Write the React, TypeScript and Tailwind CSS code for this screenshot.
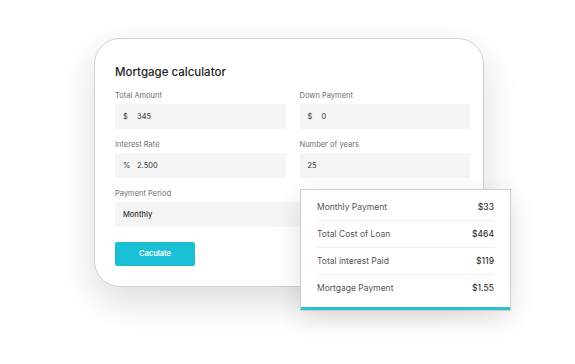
const fields = [
  { label: 'Total Amount', prefix: '$', value: '345' },
  { label: 'Down Payment', prefix: '$', value: '0' },
  { label: 'Interest Rate', prefix: '%', value: '2.500' },
  { label: 'Number of years', prefix: '', value: '25' },
];

const results = [
  { label: 'Monthly Payment', value: '$33' },
  { label: 'Total Cost of Loan', value: '$464' },
  { label: 'Total interest Paid', value: '$119' },
  { label: 'Mortgage Payment', value: '$1.55' },
];

const Field = ({ label, prefix, value }: { label: string; prefix: string; value: string }) => (
  <div className="flex flex-col">
    <span className="text-[7.5px] leading-[12px] text-[#707070]">{label}</span>
    <div className="mt-[2px] h-[25px] bg-[#f5f5f5] flex items-center px-[8px] text-[7.5px] text-[#333]">
      {prefix && <span className="w-[14px]">{prefix}</span>}
      <span>{value}</span>
    </div>
  </div>
);

const App = () => {
  return (
    <div className="relative w-[575px] h-[364px] bg-white overflow-hidden font-['Inter',sans-serif]">
      <div className="pt-[38px] pl-[94px]">
        <div className="w-[390px] h-[249px] rounded-[26px] border border-[#d2d2d2] bg-white shadow-[0_14px_36px_rgba(0,0,0,0.14)] pl-[20px] pr-[13px] pt-[24px]">
          <h1 className="text-[11.5px] leading-[18px] font-medium text-[#222]">Mortgage calculator</h1>
          <div className="mt-[9px] grid grid-cols-2 gap-x-[14px] gap-y-[10px]">
            {fields.map((f) => (
              <Field key={f.label} {...f} />
            ))}
            <div className="col-span-2 flex flex-col">
              <span className="text-[7.5px] leading-[12px] text-[#707070]">Payment Period</span>
              <div className="mt-[2px] h-[25px] bg-[#f5f5f5] flex items-center px-[8px] text-[7.5px] font-medium text-[#333]">
                Monthly
              </div>
            </div>
          </div>
          <button className="mt-[15px] w-[80px] h-[24px] rounded-[2px] bg-[#19c0d4] text-white text-[7.5px] font-semibold">
            Caculate
          </button>
        </div>
      </div>

      <div className="absolute left-[300px] top-[189px] w-[211px] bg-white border border-[#cfcfcf] shadow-[0_8px_24px_rgba(0,0,0,0.12)]">
        <div className="px-[16px] pt-[4px] pb-[5px]">
          {results.map((r, i) => (
            <div
              key={r.label}
              className={`h-[27px] flex items-center justify-between ${i < results.length - 1 ? 'border-b border-[#f0f0f0]' : ''}`}
            >
              <span className="text-[8.5px] text-[#555]">{r.label}</span>
              <span className="text-[8.5px] font-medium text-[#333]">{r.value}</span>
            </div>
          ))}
        </div>
        <div className="h-[3px] bg-[#2bbfcf]" />
      </div>
    </div>
  );
};

export default App;
